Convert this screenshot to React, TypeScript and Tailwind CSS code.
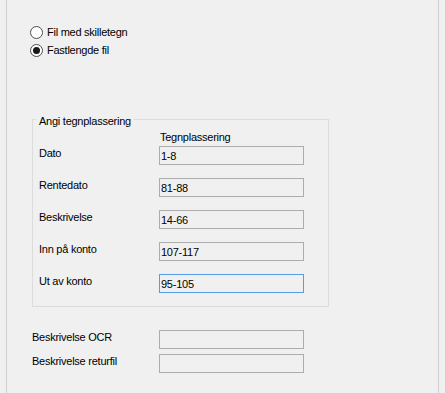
import React from "react";

const font = { fontFamily: '"Liberation Sans", Arial, sans-serif' };

function Radio({ checked, label }: { checked?: boolean; label: string }) {
  return (
    <div className="flex h-[18px] items-center gap-[4px]">
      <div className="flex h-[13px] w-[13px] items-center justify-center rounded-full border border-[#4d4d4d] bg-white">
        {checked && <div className="h-[7px] w-[7px] rounded-full bg-[#1a1a1a]" />}
      </div>
      <span className="text-[11px] leading-[13px] tracking-[-0.25px] text-black">{label}</span>
    </div>
  );
}

function Field({ value, focused }: { value: string; focused?: boolean }) {
  return (
    <input
      readOnly
      defaultValue={value}
      className={
        "box-border h-[19px] w-[145px] border bg-transparent px-[1px] text-[11px] leading-[17px] tracking-[-0.25px] text-black outline-none " +
        (focused ? "border-[#569de5]" : "border-[#adadad]")
      }
      style={font}
    />
  );
}

const rows: { label: string; value: string; focused?: boolean }[] = [
  { label: "Dato", value: "1-8" },
  { label: "Rentedato", value: "81-88" },
  { label: "Beskrivelse", value: "14-66" },
  { label: "Inn på konto", value: "107-117" },
  { label: "Ut av konto", value: "95-105", focused: true },
];

export default function App() {
  return (
    <div className="flex h-[393px] w-[446px] bg-[#f0f0f0] text-black" style={font}>
      <div className="w-[6px]" />
      <div className="box-border flex h-full w-[433px] flex-col border-x border-[#d0d0d0]">
        <div className="flex flex-col pl-[23px] pt-[23px]">
          <Radio label="Fil med skilletegn" />
          <Radio label="Fastlengde fil" checked />
        </div>

        <div className="relative ml-[25px] mt-[60px] box-border w-[297px] border border-[#dcdcdc] pb-[13px] pl-[6px] pt-[11px]">
          <span className="absolute -top-[5px] left-[3px] bg-[#f0f0f0] px-[3px] text-[11px] leading-[13px] tracking-[-0.25px]">
            Angi tegnplassering
          </span>
          <div className="grid grid-cols-[120px_145px]">
            <div />
            <div className="pl-[1px] text-[11px] leading-[13px] tracking-[-0.25px]">Tegnplassering</div>
          </div>
          <div className="mt-[2px] flex flex-col gap-[13px]">
            {rows.map((r) => (
              <div key={r.label} className="grid grid-cols-[120px_145px] items-start">
                <div className="pt-[1px] text-[11px] leading-[13px] tracking-[-0.25px]">{r.label}</div>
                <Field value={r.value} focused={r.focused} />
              </div>
            ))}
          </div>
        </div>

        <div className="ml-[25px] mt-[23px] flex flex-col gap-[5px]">
          <div className="flex items-start">
            <div className="w-[127px] pt-[1px] text-[11px] leading-[13px] tracking-[-0.25px]">Beskrivelse OCR</div>
            <Field value="" />
          </div>
          <div className="flex items-start">
            <div className="w-[127px] pt-[1px] text-[11px] leading-[13px] tracking-[-0.25px]">Beskrivelse returfil</div>
            <Field value="" />
          </div>
        </div>
      </div>
      <div className="w-[6px]" />
      <div className="h-full w-px bg-[#d0d0d0]" />
    </div>
  );
}
